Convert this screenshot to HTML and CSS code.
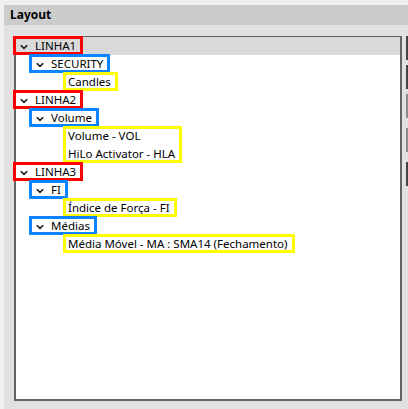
FILE: index.html
```html
<!DOCTYPE html>
<html lang="pt-BR">
<head>
<meta charset="utf-8">
<title>Layout</title>
<link rel="stylesheet" href="styles.css">
</head>
<body>
<div class="screen">
  <div class="panel">
    <div class="header">Layout</div>
    <div class="content">
      <div class="tree">
        <div class="row hover">
          <span class="node lv0 mark-red">
            <svg class="chev" width="8" height="6" viewBox="0 0 8 6"><path d="M0.8 1.2 L4 4.4 L7.2 1.2" /></svg>
            <span class="label">LINHA1</span>
          </span>
        </div>
        <div class="row">
          <span class="node lv1 mark-blue">
            <svg class="chev" width="8" height="6" viewBox="0 0 8 6"><path d="M0.8 1.2 L4 4.4 L7.2 1.2" /></svg>
            <span class="label">SECURITY</span>
          </span>
        </div>
        <div class="row">
          <span class="leaf mark-yellow"><span class="label">Candles</span></span>
        </div>
        <div class="row">
          <span class="node lv0 mark-red">
            <svg class="chev" width="8" height="6" viewBox="0 0 8 6"><path d="M0.8 1.2 L4 4.4 L7.2 1.2" /></svg>
            <span class="label">LINHA2</span>
          </span>
        </div>
        <div class="row">
          <span class="node lv1 mark-blue">
            <svg class="chev" width="8" height="6" viewBox="0 0 8 6"><path d="M0.8 1.2 L4 4.4 L7.2 1.2" /></svg>
            <span class="label">Volume</span>
          </span>
        </div>
        <div class="leaf-group mark-yellow">
          <div class="row"><span class="label">Volume - VOL</span></div>
          <div class="row"><span class="label">HiLo Activator - HLA</span></div>
        </div>
        <div class="row">
          <span class="node lv0 mark-red">
            <svg class="chev" width="8" height="6" viewBox="0 0 8 6"><path d="M0.8 1.2 L4 4.4 L7.2 1.2" /></svg>
            <span class="label">LINHA3</span>
          </span>
        </div>
        <div class="row">
          <span class="node lv1 mark-blue">
            <svg class="chev" width="8" height="6" viewBox="0 0 8 6"><path d="M0.8 1.2 L4 4.4 L7.2 1.2" /></svg>
            <span class="label">FI</span>
          </span>
        </div>
        <div class="row">
          <span class="leaf mark-yellow"><span class="label">Índice de Força - FI</span></span>
        </div>
        <div class="row">
          <span class="node lv1 mark-blue">
            <svg class="chev" width="8" height="6" viewBox="0 0 8 6"><path d="M0.8 1.2 L4 4.4 L7.2 1.2" /></svg>
            <span class="label">Médias</span>
          </span>
        </div>
        <div class="row">
          <span class="leaf mark-yellow"><span class="label">Média Móvel - MA : SMA14 (Fechamento)</span></span>
        </div>
      </div>
      <div class="side">
        <span class="bar dark"></span>
        <span class="bar dark"></span>
        <span class="bar light"></span>
        <span class="bar light"></span>
        <span class="bar dark"></span>
      </div>
    </div>
  </div>
</div>
</body>
</html>
```

FILE: styles.css
```css
* {
  box-sizing: border-box;
}

html,
body {
  margin: 0;
  padding: 0;
  width: 408px;
  height: 409px;
  overflow: hidden;
  background: #f0f0f0;
  font-family: "Noto Sans", "Segoe UI", sans-serif;
  font-size: 11.5px;
  color: #000;
}

.screen {
  height: 409px;
  padding: 5px 0 0 4px;
  background: #f0f0f0;
}

.panel {
  height: 404px;
  background: #e1e1e1;
  display: flex;
  flex-direction: column;
}

.header {
  height: 20px;
  line-height: 20px;
  padding-left: 6px;
  background: #cccccc;
  font-weight: bold;
  font-size: 12px;
}

.content {
  display: flex;
  align-items: flex-start;
  padding: 11px 0 0 10px;
}

/* tree view box */
.tree {
  width: 388px;
  height: 365px;
  background: #fff;
  border: 2px solid #646464;
  border-top-width: 1px;
  display: flex;
  flex-direction: column;
}

.row {
  height: 18px;
  flex: none;
  display: flex;
  align-items: center;
}

.row.hover {
  background: #d9d9d9;
}

.label {
  white-space: nowrap;
  line-height: 18px;
}

/* expandable node: chevron + label */
.node {
  position: relative;
  height: 18px;
  display: flex;
  align-items: center;
  padding-right: 4px;
}

.node.lv0 {
  margin-left: 0;
}

.node.lv1 {
  margin-left: 16px;
}

.chev {
  flex: none;
  margin: 1px 7px 0 4px;
}

.chev path {
  fill: none;
  stroke: #1a1a1a;
  stroke-width: 1.6;
}

/* leaf items sit under level-1 nodes */
.leaf {
  position: relative;
  height: 18px;
  display: flex;
  align-items: center;
  margin-left: 50px;
  padding: 0 4px 0 2px;
}

.leaf-group {
  position: relative;
  align-self: flex-start;
  margin-left: 50px;
  padding: 0 4px 0 2px;
}

/* coloured highlight frames around items */
.mark-red::after,
.mark-blue::after,
.mark-yellow::after {
  content: "";
  position: absolute;
  top: -1px;
  bottom: 0;
  left: -3px;
  right: -3px;
  border: 3px solid;
  pointer-events: none;
}

.mark-red::after {
  border-color: #ff0000;
}

.mark-blue::after {
  border-color: #0a84ff;
}

.mark-yellow::after {
  border-color: #ffff00;
}

/* edges of the neighbouring buttons */
.side {
  margin-left: 4px;
  width: 2px;
  display: flex;
  flex-direction: column;
}

.bar {
  display: block;
  width: 2px;
  height: 24px;
}

.bar.dark {
  background: #444;
}

.bar.light {
  background: #8c8c8c;
}

.bar:nth-child(2) {
  margin-top: 5px;
}

.bar:nth-child(3) {
  margin-top: 5px;
}

.bar:nth-child(4),
.bar:nth-child(5) {
  margin-top: 10px;
}
```
